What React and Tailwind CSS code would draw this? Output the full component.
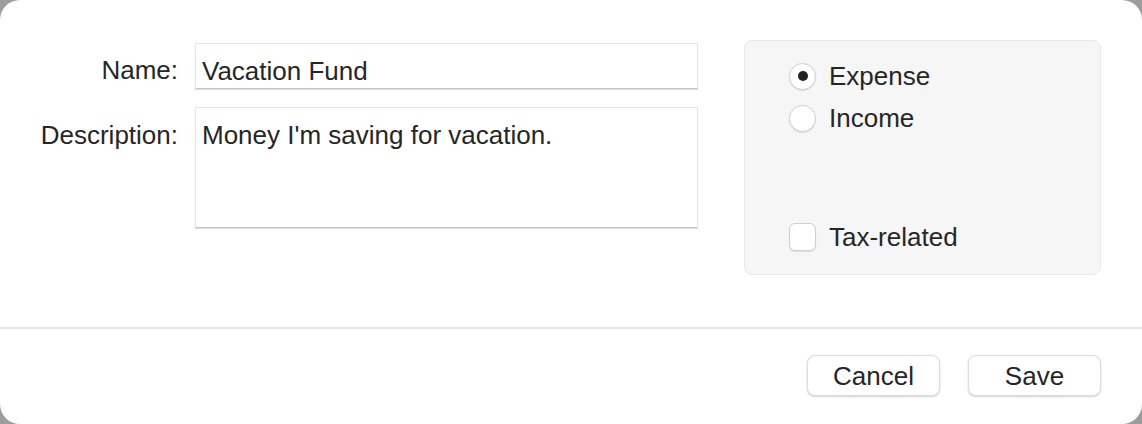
export default function App() {
    return (
        <div className="w-[1142px] h-[424px] bg-[#9c9c9c] font-['Liberation_Sans','Helvetica',sans-serif] text-[#262626]">
            <div className="w-full h-full bg-white rounded-[20px] flex flex-col">
                {/* Form area */}
                <div className="flex h-[327px] pt-[40px] pl-[40px] pr-[41px]">
                    <div className="flex flex-col text-[26px] leading-[30px]">
                        <div className="flex mt-[3px]">
                            <label className="w-[155px] text-right pr-[17px] pt-[12px]">
                                Name:
                            </label>
                            <div className="w-[503px] h-[46px] border border-[#e6e6e6] border-b-[#c4c4c4] shadow-[0_1px_1px_rgba(0,0,0,0.12)] px-[6px] pt-[12px]">
                                Vacation Fund
                            </div>
                        </div>

                        <div className="flex mt-[18px]">
                            <label className="w-[155px] text-right pr-[17px] pt-[13px]">
                                Description:
                            </label>
                            <div className="w-[503px] h-[121px] border border-[#e6e6e6] border-b-[#c4c4c4] shadow-[0_1px_1px_rgba(0,0,0,0.12)] px-[6px] pt-[12px]">
                                Money I'm saving for vacation.
                            </div>
                        </div>
                    </div>

                    {/* Options box */}
                    <div className="ml-[46px] w-[357px] h-[235px] bg-[#f6f6f6] border border-[#e8e8e8] rounded-[8px] flex flex-col pl-[44px] pt-[21px] text-[26px]">
                        <div className="flex items-center gap-[13px] h-[28px]">
                            <span className="w-[27px] h-[27px] rounded-full bg-white border border-[#d0d0d0] shadow-[0_1px_1px_rgba(0,0,0,0.1)] flex items-center justify-center">
                                <span className="w-[10px] h-[10px] rounded-full bg-[#222]" />
                            </span>
                            <span>Expense</span>
                        </div>
                        <div className="flex items-center gap-[13px] h-[28px] mt-[14px]">
                            <span className="w-[27px] h-[27px] rounded-full bg-white border border-[#d0d0d0] shadow-[0_1px_1px_rgba(0,0,0,0.1)]" />
                            <span>Income</span>
                        </div>
                        <div className="flex items-center gap-[13px] h-[28px] mt-[91px]">
                            <span className="w-[27px] h-[28px] rounded-[6px] bg-white border border-[#cfcfcf] shadow-[0_1px_1px_rgba(0,0,0,0.1)]" />
                            <span>Tax-related</span>
                        </div>
                    </div>
                </div>

                {/* Separator */}
                <div className="h-[2px] bg-[#e3e3e3]" />

                {/* Buttons */}
                <div className="flex justify-end gap-[28px] pr-[41px] pt-[26px]">
                    <button className="w-[133px] h-[41px] bg-white rounded-[8px] border border-[#dcdcdc] shadow-[0_1px_2px_rgba(0,0,0,0.18)] text-[26px] leading-[30px]">
                        Cancel
                    </button>
                    <button className="w-[133px] h-[41px] bg-white rounded-[8px] border border-[#dcdcdc] shadow-[0_1px_2px_rgba(0,0,0,0.18)] text-[26px] leading-[30px]">
                        Save
                    </button>
                </div>
            </div>
        </div>
    );
}
